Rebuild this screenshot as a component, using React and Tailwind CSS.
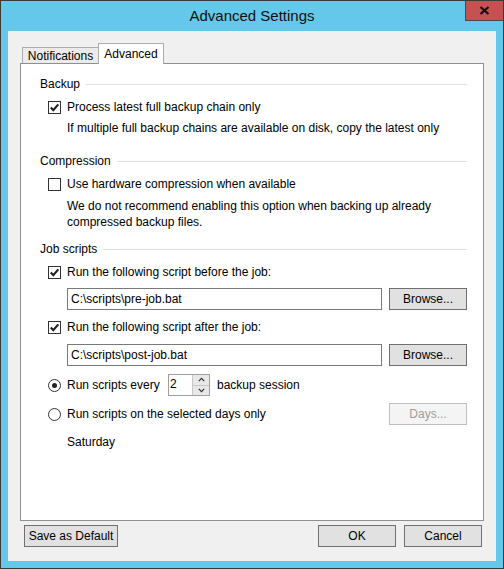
import React from "react";

function Check({ checked }) {
  return (
    <span className="w-[13px] h-[13px] border border-[#333333] bg-white flex items-center justify-center shrink-0">
      {checked && (
        <svg width="11" height="11" viewBox="0 0 11 11">
          <path d="M1.8 5.6 L4.3 8.2 L9.3 2.4" fill="none" stroke="#222" strokeWidth="2.2" />
        </svg>
      )}
    </span>
  );
}

function Radio({ checked }) {
  return (
    <span className="w-[13px] h-[13px] rounded-full border border-[#333333] bg-white flex items-center justify-center shrink-0">
      {checked && <span className="w-[5px] h-[5px] rounded-full bg-[#222]" />}
    </span>
  );
}

function Section({ label, className }) {
  return (
    <div className={"h-[20px] flex items-center " + (className || "")}>
      <span>{label}</span>
      <span className="flex-1 h-px bg-[#dde1e6] ml-[6px]" />
    </div>
  );
}

function Btn({ children, className }) {
  return (
    <div
      className={
        "h-[22px] flex items-center justify-center bg-[#e1e1e1] border border-[#707070] " +
        (className || "")
      }
    >
      {children}
    </div>
  );
}

export default function App() {
  return (
    <div className="w-[504px] h-[569px] bg-[#63c8e9] border border-[#3a3a3a] flex flex-col relative font-['Liberation_Sans',Arial,sans-serif] text-[12px] text-black">
      <div className="h-[30px] flex items-center justify-center text-[15px] text-[#111]">
        Advanced Settings
      </div>
      <div className="absolute top-0 right-0 w-[38px] h-[20px] bg-[#c75050] border-l border-b border-[#4a4a4a] flex items-center justify-center">
        <svg width="11" height="9" viewBox="0 0 11 9">
          <path d="M1.5 1 L9.5 8 M9.5 1 L1.5 8" stroke="#111" strokeWidth="2.2" fill="none" />
        </svg>
      </div>

      <div className="mx-[7px] h-[530px] bg-[#f0f0f0] flex flex-col">
        <div className="pt-[12px] px-[12px]">
          <div className="h-[20px] flex items-end ml-[2px]">
            <div className="w-[76px] h-[16px] border-l border-t border-[#acacac] bg-[#ebebeb] flex items-center justify-center">
              Notifications
            </div>
            <div className="w-[66px] h-[21px] -mb-px relative z-10 border-l border-t border-r border-[#acacac] bg-white flex items-center justify-center">
              Advanced
            </div>
          </div>
          <div className="h-[458px] border border-[#8e8f8f] bg-white pt-[10px] pl-[19px] pr-[16px]">
            <Section label="Backup" />
            <div className="h-[20px] mt-[3px] flex items-center pl-[8px]">
              <Check checked />
              <span className="ml-[6px]">Process latest full backup chain only</span>
            </div>
            <div className="h-[20px] mt-[1px] flex items-center pl-[27px]">
              If multiple full backup chains are available on disk, copy the latest only
            </div>

            <Section label="Compression" className="mt-[13px]" />
            <div className="h-[20px] mt-[3px] flex items-center pl-[8px]">
              <Check />
              <span className="ml-[6px]">Use hardware compression when available</span>
            </div>
            <div className="mt-[4px] pl-[27px] leading-[16px]">
              We do not recommend enabling this option when backing up already
              <br />
              compressed backup files.
            </div>

            <Section label="Job scripts" className="mt-[9px]" />
            <div className="h-[20px] mt-[3px] flex items-center pl-[8px]">
              <Check checked />
              <span className="ml-[6px]">Run the following script before the job:</span>
            </div>
            <div className="h-[22px] mt-[6px] flex pl-[27px]">
              <div className="w-[315px] h-[22px] border border-[#7a7a7a] bg-white flex items-center pl-[3px]">
                C:\scripts\pre-job.bat
              </div>
              <Btn className="w-[78px] ml-[7px]">Browse...</Btn>
            </div>
            <div className="h-[20px] mt-[7px] flex items-center pl-[8px]">
              <Check checked />
              <span className="ml-[6px]">Run the following script after the job:</span>
            </div>
            <div className="h-[22px] mt-[7px] flex pl-[27px]">
              <div className="w-[315px] h-[22px] border border-[#7a7a7a] bg-white flex items-center pl-[3px]">
                C:\scripts\post-job.bat
              </div>
              <Btn className="w-[78px] ml-[7px]">Browse...</Btn>
            </div>

            <div className="h-[22px] mt-[8px] flex items-center pl-[8px]">
              <Radio checked />
              <span className="ml-[6px] w-[101px]">Run scripts every</span>
              <div className="w-[42px] h-[22px] border border-[#a0a0a0] bg-white flex">
                <span className="flex-1 pl-[1px] leading-[18px]">2</span>
                <div className="w-[17px] flex flex-col border-l border-[#c8c8c8]">
                  <div className="flex-1 bg-[#e8e8e8] border-b border-[#c8c8c8] flex items-center justify-center">
                    <svg width="7" height="5" viewBox="0 0 7 5">
                      <path d="M0.8 4.2 L3.5 1.3 L6.2 4.2" stroke="#333" strokeWidth="1.2" fill="none" />
                    </svg>
                  </div>
                  <div className="flex-1 bg-[#e8e8e8] flex items-center justify-center">
                    <svg width="7" height="5" viewBox="0 0 7 5">
                      <path d="M0.8 0.8 L3.5 3.7 L6.2 0.8" stroke="#333" strokeWidth="1.2" fill="none" />
                    </svg>
                  </div>
                </div>
              </div>
              <span className="ml-[7px]">backup session</span>
            </div>
            <div className="h-[22px] mt-[7px] flex items-center justify-between pl-[8px]">
              <div className="flex items-center">
                <Radio />
                <span className="ml-[6px]">Run scripts on the selected days only</span>
              </div>
              <div className="w-[78px] h-[22px] border border-[#bfbfbf] bg-[#f4f4f4] text-[#9d9d9d] flex items-center justify-center">
                Days...
              </div>
            </div>
            <div className="h-[20px] mt-[7px] flex items-center pl-[27px]">Saturday</div>
          </div>
        </div>

        <div className="mt-[4px] flex items-center pl-[16px] pr-[14px]">
          <Btn className="w-[94px]">Save as Default</Btn>
          <div className="flex-1" />
          <Btn className="w-[78px] border-[#3c7fb1]">OK</Btn>
          <Btn className="w-[78px] ml-[8px]">Cancel</Btn>
        </div>
      </div>
    </div>
  );
}
